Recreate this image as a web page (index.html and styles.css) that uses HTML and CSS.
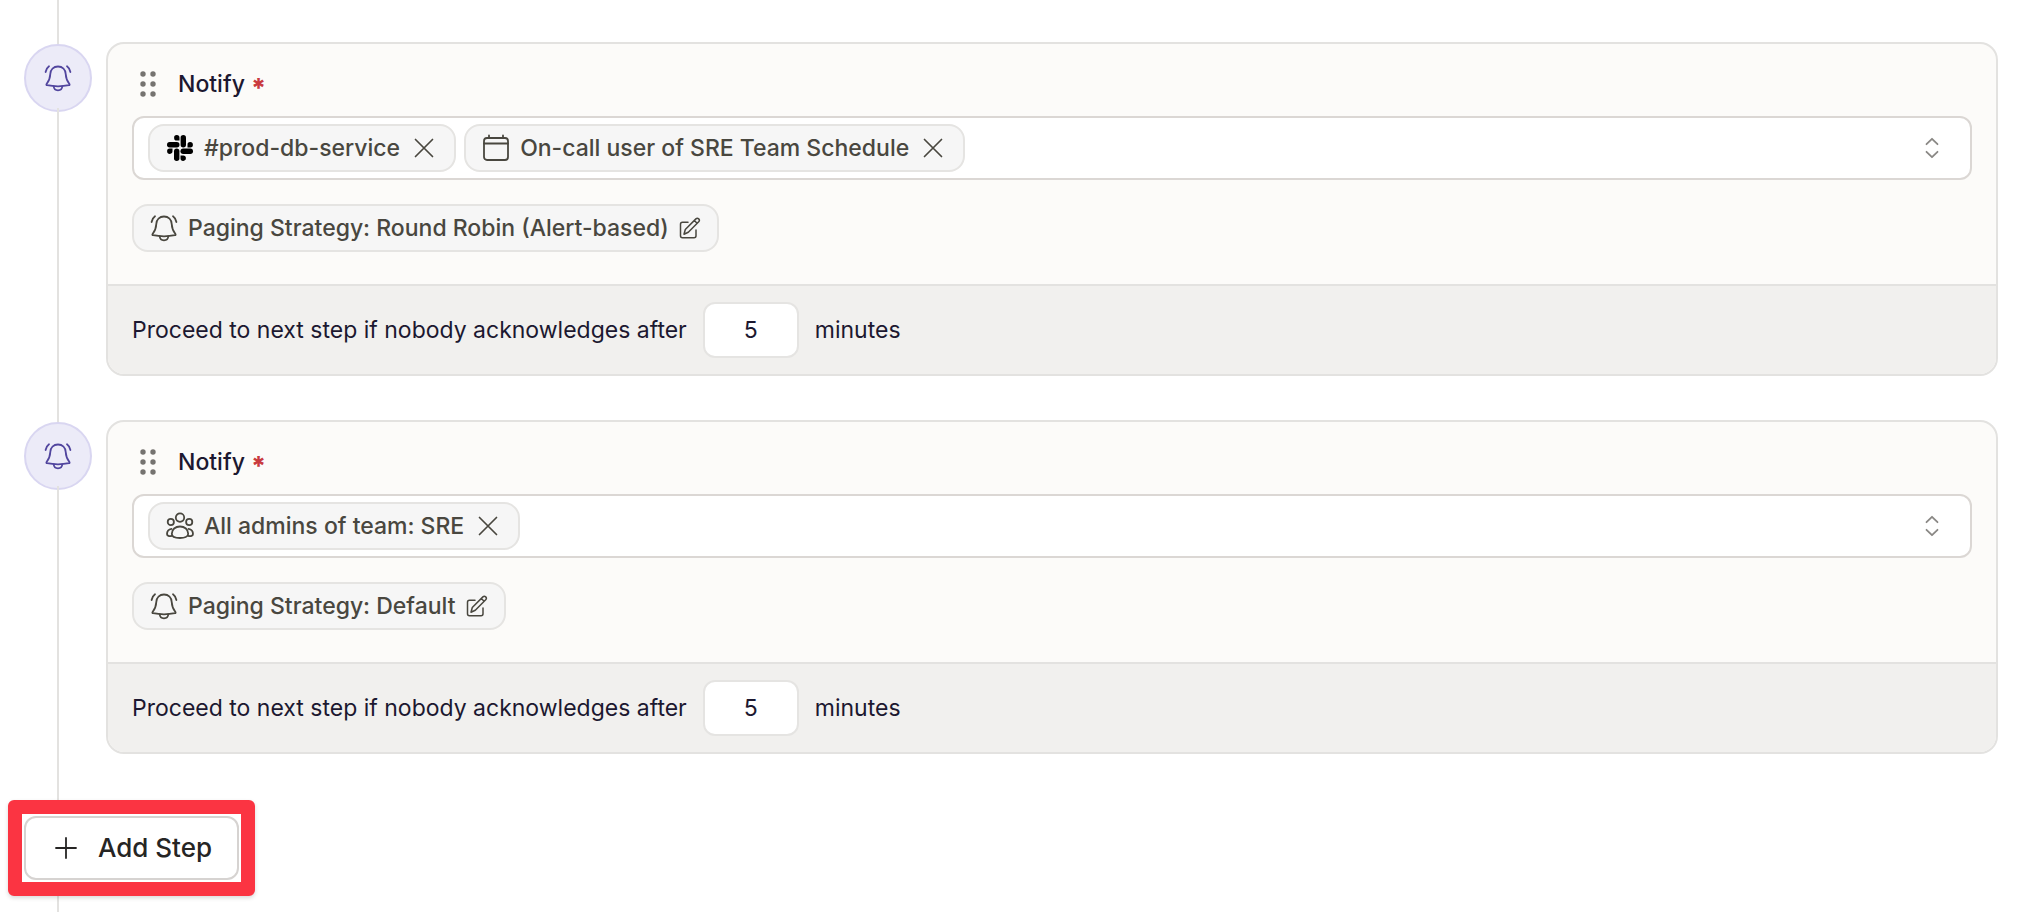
FILE: index.html
```html
<!DOCTYPE html>
<html lang="en">
<head>
<meta charset="utf-8">
<meta name="viewport" content="width=device-width, initial-scale=1">
<title>Escalation steps</title>
<link rel="stylesheet" href="styles.css">
</head>
<body>
<svg class="sprite" aria-hidden="true">
  <symbol id="bell" viewBox="0 0 28 28">
    <path d="M14 2.500C9.500 2.500 6.500 5.700 6.300 10C6.100 14.500 5 17 2.600 20C2.200 20.600 2.400 21.100 3.100 21.200C7 22 10.500 22.300 14 22.300C17.500 22.300 21 22 24.900 21.200C25.600 21.100 25.800 20.600 25.400 20C23 17 21.900 14.500 21.700 10C21.500 5.700 18.500 2.500 14 2.500Z"/>
    <path d="M9.700 22.300C9.900 24.900 11.500 26.400 14 26.400C16.500 26.400 18.100 24.900 18.300 22.300M5 2.200C3.200 3.500 2 5.500 1.600 8M23 2.200C24.800 3.500 26 5.500 26.400 8"/>
  </symbol>
  <symbol id="close" viewBox="0 0 28 28"><path stroke-width="1.700" d="M5.500 5.500L22.500 22.500M22.500 5.500L5.500 22.500"/></symbol>
  <symbol id="edit" viewBox="0 0 22 22">
    <g stroke-width="1.500">
      <path d="M9 5.200H3.500C2.300 5.200 1.500 6 1.500 7.200V18.800C1.500 20 2.300 20.800 3.500 20.800H15C16.200 20.800 17 20 17 18.800V13"/>
      <path d="M5 17.200L6.300 12.500L16.900 1.900C17.700 1.100 18.900 1.100 19.700 1.900C20.500 2.700 20.500 3.900 19.700 4.700L9.300 15.300ZM15.300 3.500L18.100 6.300"/>
    </g>
  </symbol>
  <symbol id="calendar" viewBox="0 0 28 28">
    <rect x="2" y="4" width="24" height="22" rx="3"/>
    <path d="M2 9.500H26M7 1.500V4M21 1.500V4"/>
  </symbol>
  <symbol id="team" viewBox="0 0 28 28">
    <circle cx="14" cy="5.600" r="4.200"/><circle cx="4.800" cy="10" r="3.100"/><circle cx="23.200" cy="10" r="3.100"/>
    <path d="M14 14.500C9.300 14.500 5.800 17.500 5.800 21.700C5.800 24.700 9.500 26 14 26C18.500 26 22.200 24.700 22.200 21.700C22.200 17.500 18.700 14.500 14 14.500Z"/>
    <path d="M5.500 16.800C2.800 17.200 1 19.500 1 22C1 23.800 3.200 24.400 5.800 23.900M22.500 16.800C25.200 17.200 27 19.500 27 22C27 23.800 24.800 24.400 22.200 23.900"/>
  </symbol>
  <symbol id="slack" viewBox="0 0 28 28">
    <g stroke="none" fill="#000">
      <rect x="1" y="8" width="12.500" height="5.400" rx="2.700"/><path d="M13.500 6.500H10.900A2.700 2.700 0 1 1 13.500 3.700Z"/>
      <rect x="14.600" y="1" width="5.400" height="12.500" rx="2.700"/><path d="M21.500 13.500V10.900A2.700 2.700 0 1 1 24.300 13.500Z"/>
      <rect x="14.500" y="14.600" width="12.500" height="5.400" rx="2.700"/><path d="M14.500 21.500H17.100A2.700 2.700 0 1 1 14.500 24.300Z"/>
      <rect x="8" y="14.500" width="5.400" height="12.500" rx="2.700"/><path d="M6.500 14.500V17.100A2.700 2.700 0 1 1 3.700 14.500Z"/>
    </g>
  </symbol>
  <symbol id="updown" viewBox="0 0 28 28"><path stroke-width="1.800" d="M8.500 10.200L14 4.800L19.500 10.200M8.500 17.800L14 23.200L19.500 17.800"/></symbol>
  <symbol id="grip" viewBox="0 0 32 32">
    <g stroke="none" fill="#757370"><circle cx="11" cy="6" r="2.700"/><circle cx="21" cy="6" r="2.700"/><circle cx="11" cy="16" r="2.700"/><circle cx="21" cy="16" r="2.700"/><circle cx="11" cy="26" r="2.700"/><circle cx="21" cy="26" r="2.700"/></g>
  </symbol>
  <symbol id="plus" viewBox="0 0 28 28"><path d="M14 4V24M4 14H24"/></symbol>
</svg>

<main class="timeline">
  <ol class="steps">
    <li class="step">
      <span class="badge"><svg class="icon" aria-hidden="true"><use href="#bell"/></svg></span>
      <section class="card">
        <div class="card-body">
          <div class="field-head">
            <button class="plain grip" type="button" aria-label="Reorder step"><svg aria-hidden="true"><use href="#grip"/></svg></button>
            <label class="field-label" for="notify-1">Notify <span class="required">*</span></label>
          </div>
          <div class="select">
            <span class="chip"><svg class="icon" aria-hidden="true"><use href="#slack"/></svg>#prod-db-service<button class="plain" type="button" aria-label="Remove #prod-db-service"><svg class="icon" aria-hidden="true"><use href="#close"/></svg></button></span>
            <span class="chip"><svg class="icon" aria-hidden="true"><use href="#calendar"/></svg>On-call user of SRE Team Schedule<button class="plain" type="button" aria-label="Remove On-call user of SRE Team Schedule"><svg class="icon" aria-hidden="true"><use href="#close"/></svg></button></span>
            <input class="select-input" id="notify-1" type="text" autocomplete="off">
            <button class="plain toggle" type="button" aria-label="Show options"><svg class="icon" aria-hidden="true"><use href="#updown"/></svg></button>
          </div>
          <button class="chip strategy" type="button"><svg class="icon" aria-hidden="true"><use href="#bell"/></svg>Paging Strategy: Round Robin (Alert-based)<svg class="icon-small" aria-hidden="true"><use href="#edit"/></svg></button>
        </div>
        <div class="card-foot">
          <label for="delay-1">Proceed to next step if nobody acknowledges after</label>
          <input class="delay" id="delay-1" type="text" inputmode="numeric" value="5">
          <span>minutes</span>
        </div>
      </section>
    </li>
    <li class="step">
      <span class="badge"><svg class="icon" aria-hidden="true"><use href="#bell"/></svg></span>
      <section class="card">
        <div class="card-body">
          <div class="field-head">
            <button class="plain grip" type="button" aria-label="Reorder step"><svg aria-hidden="true"><use href="#grip"/></svg></button>
            <label class="field-label" for="notify-2">Notify <span class="required">*</span></label>
          </div>
          <div class="select">
            <span class="chip"><svg class="icon" aria-hidden="true"><use href="#team"/></svg>All admins of team: SRE<button class="plain" type="button" aria-label="Remove All admins of team: SRE"><svg class="icon" aria-hidden="true"><use href="#close"/></svg></button></span>
            <input class="select-input" id="notify-2" type="text" autocomplete="off">
            <button class="plain toggle" type="button" aria-label="Show options"><svg class="icon" aria-hidden="true"><use href="#updown"/></svg></button>
          </div>
          <button class="chip strategy" type="button"><svg class="icon" aria-hidden="true"><use href="#bell"/></svg>Paging Strategy: Default<svg class="icon-small" aria-hidden="true"><use href="#edit"/></svg></button>
        </div>
        <div class="card-foot">
          <label for="delay-2">Proceed to next step if nobody acknowledges after</label>
          <input class="delay" id="delay-2" type="text" inputmode="numeric" value="5">
          <span>minutes</span>
        </div>
      </section>
    </li>
  </ol>
  <div class="highlight">
    <button class="add-step" type="button"><svg class="icon" aria-hidden="true"><use href="#plus"/></svg>Add Step</button>
  </div>
</main>
</body>
</html>
```
FILE: styles.css
```css
* { box-sizing: border-box; }

body {
  margin: 0;
  background: #fff;
  color: #1c1830;
  font-family: Inter, "Liberation Sans", sans-serif;
  font-size: 23px;
  line-height: 32px;
}

button, input { font: inherit; color: inherit; }

svg {
  display: block;
  flex: none;
  fill: none;
  stroke: currentColor;
  stroke-width: 1.8;
  stroke-linecap: round;
  stroke-linejoin: round;
}

.sprite { display: none; }
.icon { width: 28px; height: 28px; }
.icon-small { width: 22px; height: 22px; }

.plain {
  display: flex;
  padding: 0;
  border: 0;
  background: none;
  cursor: pointer;
}

.timeline {
  position: relative;
  min-height: 100vh;
  padding: 42px 36px 16px 8px;
}

/* Vertical rail behind the badges and the add button */
.timeline::before {
  content: "";
  position: absolute;
  top: 0;
  bottom: 0;
  left: 57px;
  width: 2px;
  background: #e3e2e0;
}

.steps {
  display: grid;
  gap: 44px;
  margin: 0;
  padding: 0 0 0 16px;
  list-style: none;
}

.step {
  display: grid;
  grid-template-columns: 68px minmax(0, 1fr);
  gap: 14px;
}

.badge {
  position: relative;
  display: grid;
  place-items: center;
  width: 68px;
  height: 68px;
  margin-top: 2px;
  border: 2px solid #d9d6f1;
  border-radius: 50%;
  background: #ecebf8;
  color: #51459e;
}

/* The rail leaves each badge from just inside its lower edge */
.badge::after {
  content: "";
  position: absolute;
  bottom: -2px;
  left: 31px;
  width: 2px;
  height: 4px;
  background: #e3e2e0;
}

.card {
  overflow: hidden;
  border: 2px solid #e3e2e0;
  border-radius: 18px;
  background: #fcfbf9;
}

.card-body { padding: 24px 24px 32px; }

.field-head {
  display: flex;
  align-items: center;
  gap: 14px;
  margin-bottom: 16px;
}

.grip { cursor: grab; }
.grip svg { width: 32px; height: 32px; }

.field-label {
  display: flex;
  gap: 6px;
  font-weight: 500;
}

.required {
  height: 32px;
  padding-top: 4px;
  color: #c93a3f;
  font-size: 26px;
  font-weight: 800;
}

.select {
  display: flex;
  align-items: center;
  gap: 8px;
  min-height: 64px;
  padding: 6px 24px 6px 14px;
  border: 2px solid #dbd7d4;
  border-radius: 12px;
  background: #fff;
}

.select-input {
  flex: 1;
  min-width: 0;
  border: 0;
  outline: 0;
  background: none;
}

.toggle { color: #8a8885; }

.chip {
  display: flex;
  align-items: center;
  gap: 10px;
  height: 48px;
  padding: 0 16px;
  border: 2px solid #e5e4e2;
  border-radius: 16px;
  background: #f6f6f6;
  color: #49473f;
  font-weight: 500;
  white-space: nowrap;
}

.strategy {
  margin-top: 24px;
  cursor: pointer;
}

.card-foot {
  display: flex;
  align-items: center;
  gap: 16px;
  padding: 16px 24px;
  border-top: 2px solid #e3e2e0;
  background: #f1f0ee;
}

.delay {
  width: 96px;
  height: 56px;
  padding: 0;
  border: 2px solid #e5e4e2;
  border-radius: 12px;
  background: #fff;
  text-align: center;
}

.highlight {
  position: relative;
  width: fit-content;
  margin-top: 46px;
  padding: 2px;
  border: 14px solid #fb3442;
  border-radius: 6px;
  background: #fff;
  box-shadow: 0 2px 4px rgb(0 0 0 / 15%);
}

.add-step {
  display: flex;
  align-items: center;
  gap: 18px;
  height: 64px;
  padding: 0 25px 0 26px;
  border: 2px solid #d6d3d1;
  border-radius: 12px;
  background: #fff;
  color: #262524;
  font-size: 26px;
  font-weight: 500;
  cursor: pointer;
}
```
